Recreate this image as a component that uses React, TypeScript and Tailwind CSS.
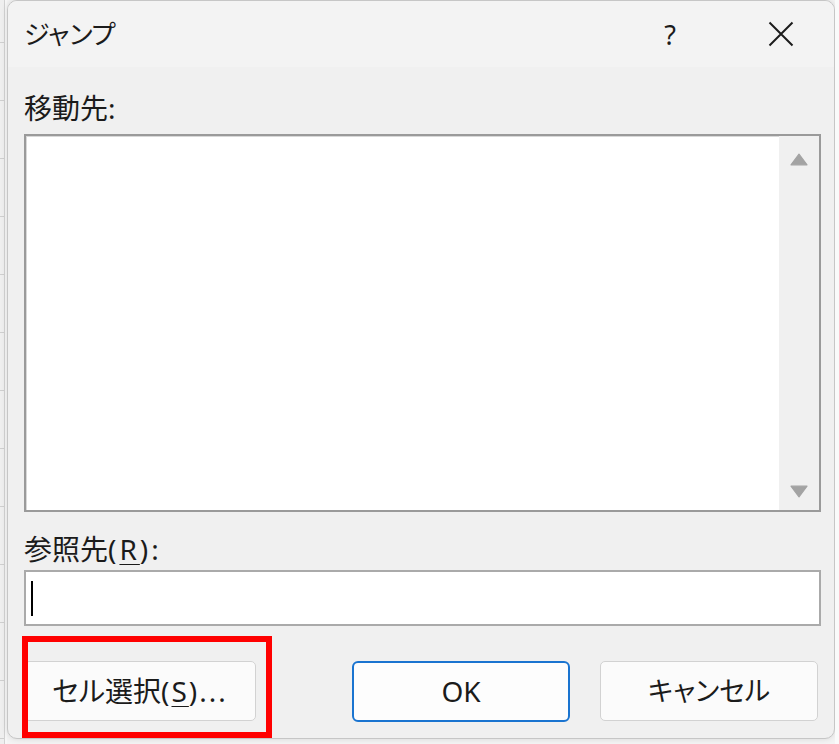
import { CSSProperties } from 'react';

const jp: CSSProperties = {
  fontFamily: '"Noto Sans", "Noto Sans CJK JP", sans-serif',
};

// faint spreadsheet grid peeking out on the left of the dialog
function SheetEdge() {
  const rows = Array.from({ length: 12 });
  return (
    <div className="flex h-full w-[7px] shrink-0">
      <div className="flex w-[4px] flex-col bg-[#efefef]">
        <div className="h-[43px] shrink-0 border-b border-[#cfcfcf]" />
        {rows.map((_, i) => (
          <div key={i} className="h-[58px] shrink-0 border-b border-[#cfcfcf]" />
        ))}
      </div>
      <div className="w-px bg-[#d2d2d2]" />
      <div className="w-[2px] bg-[#f7f7f7]" />
    </div>
  );
}

function Triangle({ down }: { down?: boolean }) {
  return (
    <svg width="18" height="13" viewBox="0 0 18 13" className={down ? 'rotate-180' : ''}>
      <path d="M9 1.2 L17 11.8 L1 11.8 Z" fill="#a3a3a3" stroke="#a3a3a3" strokeWidth="1.2" strokeLinejoin="round" />
    </svg>
  );
}

export default function App() {
  return (
    <div className="relative flex h-[744px] w-[839px] overflow-hidden bg-[#f4f4f4]" style={jp}>
      <SheetEdge />

      <div className="flex h-[739px] w-[828px] shrink-0 flex-col overflow-hidden rounded-[10px] border border-[#c6c6c6] bg-[#f0f0f0] shadow-[0_0_6px_rgba(0,0,0,0.12)]">
        {/* title bar */}
        <div className="flex h-[66px] shrink-0 items-center bg-[#f3f3f3] pl-[16px] pr-[33px]">
          <span className="text-[26px] leading-none text-[#1b1b1b] [font-feature-settings:'palt']">ジャンプ</span>
          <span className="ml-auto flex w-[46px] justify-center text-[27px] leading-none text-[#1b1b1b]">?</span>
          <span className="ml-[68px] flex w-[40px] justify-center">
            <svg width="26" height="26" viewBox="0 0 26 26">
              <path d="M1.5 1.5 L24.5 24.5 M24.5 1.5 L1.5 24.5" stroke="#1b1b1b" strokeWidth="2" />
            </svg>
          </span>
        </div>

        {/* body */}
        <div className="flex flex-1 flex-col pl-[16px] pr-[13px]">
          <div className="mt-[21px] h-[40px] text-[28px] leading-[40px] text-[#1b1b1b]">移動先:</div>

          <div className="mt-[6px] flex h-[378px] border-2 border-[#9a9a9a] bg-white">
            <div className="flex-1 border-l border-t border-[#d8d8d8]" />
            <div className="flex w-[40px] flex-col items-center justify-between bg-[#f0f0f0] pt-[17px] pb-[12px]">
              <Triangle />
              <Triangle down />
            </div>
          </div>

          <div className="mt-[17px] h-[40px] text-[28px] leading-[40px] text-[#1b1b1b]">
            参照先<span className="tracking-[3px]">(<span className="underline decoration-1 underline-offset-4">R</span>):</span>
          </div>

          <div className="mt-px flex h-[56px] items-center border-2 border-[#aaaaaa] bg-white pl-[5px]">
            <div className="h-[35px] w-[2px] bg-black" />
          </div>

          <div className="mt-[35px] flex h-[60px] items-center">
            <button className="flex h-[60px] w-[232px] items-center justify-center rounded-[5px] border border-[#d2d2d2] bg-[#fbfbfb] text-[28px] text-[#1b1b1b] [font-feature-settings:'palt']">
              セル選択<span className="tracking-[2px]">(<span className="underline decoration-1 underline-offset-4">S</span>)...</span>
            </button>
            <button className="ml-[96px] flex h-[61px] w-[218px] items-center justify-center rounded-[6px] border-2 border-[#1a74d0] bg-[#fdfdfd] text-[28px] text-[#1b1b1b]">
              OK
            </button>
            <button className="ml-[30px] flex h-[60px] w-[218px] items-center justify-center rounded-[5px] border border-[#d2d2d2] bg-[#fbfbfb] text-[27px] text-[#1b1b1b] [font-feature-settings:'palt']">
              キャンセル
            </button>
          </div>
        </div>
      </div>

      <div className="h-full flex-1 bg-[#fafafa]" />

      {/* highlight annotation */}
      <div className="absolute left-[22px] top-[636px] h-[102px] w-[250px] border-[6px] border-[#ff0000]" />
    </div>
  );
}
